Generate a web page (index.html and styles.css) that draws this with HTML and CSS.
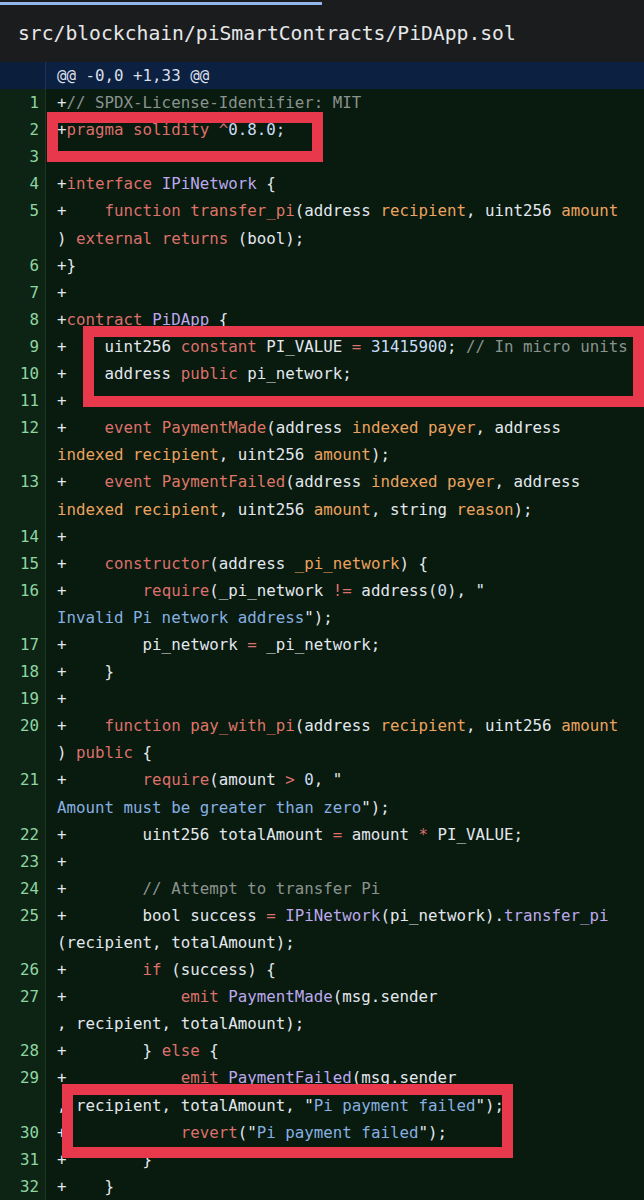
FILE: index.html
```
<!DOCTYPE html>
<html>
<head>
<meta charset="utf-8">
<link rel="stylesheet" href="styles.css">
</head>
<body>
<div class="page">
  <header class="filehead">
    <div class="progress"></div>
    <div class="title">src/blockchain/piSmartContracts/PiDApp.sol</div>
  </header>
  <div class="diff">
    <div class="row hunk"><div class="ln"></div><div class="code">@@ -0,0 +1,33 @@</div></div>
    <div class="row"><div class="ln">1</div><div class="code">+<span class="c">// SPDX-License-Identifier: MIT</span></div></div>
    <div class="row"><div class="ln">2</div><div class="code">+<span class="k">pragma solidity ^</span><span class="n">0.8.0;</span></div></div>
    <div class="row"><div class="ln">3</div><div class="code">+</div></div>
    <div class="row"><div class="ln">4</div><div class="code">+<span class="k">interface</span> <span class="t">IPiNetwork</span> {</div></div>
    <div class="row"><div class="ln">5</div><div class="code">+    <span class="k">function</span> <span class="f">transfer_pi</span>(address <span class="p">recipient</span>, uint256 <span class="p">amount</span></div></div>
    <div class="row"><div class="ln"></div><div class="code">) <span class="k">external</span> <span class="k">returns</span> (bool);</div></div>
    <div class="row"><div class="ln">6</div><div class="code">+}</div></div>
    <div class="row"><div class="ln">7</div><div class="code">+</div></div>
    <div class="row"><div class="ln">8</div><div class="code">+<span class="k">contract</span> <span class="t">PiDApp</span> {</div></div>
    <div class="row"><div class="ln">9</div><div class="code">+    uint256 <span class="k">constant</span> PI_VALUE <span class="k">=</span> <span class="n">31415900</span>; <span class="c">// In micro units</span></div></div>
    <div class="row"><div class="ln">10</div><div class="code">+    address <span class="k">public</span> pi_network;</div></div>
    <div class="row"><div class="ln">11</div><div class="code">+</div></div>
    <div class="row"><div class="ln">12</div><div class="code">+    <span class="k">event</span> <span class="f">PaymentMade</span>(address <span class="p">indexed</span> <span class="p">payer</span>, address</div></div>
    <div class="row"><div class="ln"></div><div class="code"><span class="p">indexed</span> <span class="p">recipient</span>, uint256 <span class="p">amount</span>);</div></div>
    <div class="row"><div class="ln">13</div><div class="code">+    <span class="k">event</span> <span class="f">PaymentFailed</span>(address <span class="p">indexed</span> <span class="p">payer</span>, address</div></div>
    <div class="row"><div class="ln"></div><div class="code"><span class="p">indexed</span> <span class="p">recipient</span>, uint256 <span class="p">amount</span>, string <span class="p">reason</span>);</div></div>
    <div class="row"><div class="ln">14</div><div class="code">+</div></div>
    <div class="row"><div class="ln">15</div><div class="code">+    <span class="k">constructor</span>(address <span class="p">_pi_network</span>) {</div></div>
    <div class="row"><div class="ln">16</div><div class="code">+        <span class="k">require</span>(_pi_network <span class="k">!=</span> address(<span class="n">0</span>), "</div></div>
    <div class="row"><div class="ln"></div><div class="code"><span class="s">Invalid Pi network address</span>");</div></div>
    <div class="row"><div class="ln">17</div><div class="code">+        pi_network <span class="k">=</span> _pi_network;</div></div>
    <div class="row"><div class="ln">18</div><div class="code">+    }</div></div>
    <div class="row"><div class="ln">19</div><div class="code">+</div></div>
    <div class="row"><div class="ln">20</div><div class="code">+    <span class="k">function</span> <span class="f">pay_with_pi</span>(address <span class="p">recipient</span>, uint256 <span class="p">amount</span></div></div>
    <div class="row"><div class="ln"></div><div class="code">) <span class="k">public</span> {</div></div>
    <div class="row"><div class="ln">21</div><div class="code">+        <span class="k">require</span>(amount <span class="k">&gt;</span> <span class="n">0</span>, "</div></div>
    <div class="row"><div class="ln"></div><div class="code"><span class="s">Amount must be greater than zero</span>");</div></div>
    <div class="row"><div class="ln">22</div><div class="code">+        uint256 totalAmount <span class="k">=</span> amount <span class="k">*</span> PI_VALUE;</div></div>
    <div class="row"><div class="ln">23</div><div class="code">+</div></div>
    <div class="row"><div class="ln">24</div><div class="code">+        <span class="c">// Attempt to transfer Pi</span></div></div>
    <div class="row"><div class="ln">25</div><div class="code">+        bool success <span class="k">=</span> <span class="t">IPiNetwork</span>(pi_network).<span class="t">transfer_pi</span></div></div>
    <div class="row"><div class="ln"></div><div class="code">(recipient, totalAmount);</div></div>
    <div class="row"><div class="ln">26</div><div class="code">+        <span class="k">if</span> (success) {</div></div>
    <div class="row"><div class="ln">27</div><div class="code">+            <span class="k">emit</span> <span class="t">PaymentMade</span>(msg.sender</div></div>
    <div class="row"><div class="ln"></div><div class="code">, recipient, totalAmount);</div></div>
    <div class="row"><div class="ln">28</div><div class="code">+        } <span class="k">else</span> {</div></div>
    <div class="row"><div class="ln">29</div><div class="code">+            <span class="k">emit</span> <span class="t">PaymentFailed</span>(msg.sender</div></div>
    <div class="row"><div class="ln"></div><div class="code">, recipient, totalAmount, "<span class="s">Pi payment failed</span>");</div></div>
    <div class="row"><div class="ln">30</div><div class="code">+            <span class="k">revert</span>("<span class="s">Pi payment failed</span>");</div></div>
    <div class="row"><div class="ln">31</div><div class="code">+        }</div></div>
    <div class="row"><div class="ln">32</div><div class="code">+    }</div></div>
  </div>
  <div class="mark mark-1"></div>
  <div class="mark mark-2"></div>
  <div class="mark mark-3"></div>
</div>
</body>
</html>
```

FILE: styles.css
```
html, body {
  margin: 0;
  padding: 0;
  background: #091a0f;
}

.page {
  position: relative;
  width: 644px;
  height: 1200px;
  overflow: hidden;
  font-family: "DejaVu Sans Mono", "Liberation Mono", monospace;
}

.filehead {
  height: 62px;
  background: #1b1c1e;
  display: flex;
  flex-direction: column;
}

.progress {
  margin-top: 2px;
  width: 322px;
  height: 3px;
  background: #93b7ec;
}

.title {
  padding-left: 18px;
  margin-top: 17px;
  font-size: 19.7px;
  line-height: 24px;
  color: #e6e7e9;
  white-space: pre;
}

.diff {
  display: flex;
  flex-direction: column;
}

.row {
  display: flex;
  height: 27.1px;
  line-height: 27.1px;
  font-size: 15.8px;
  background: #091a0f;
}

.ln {
  width: 39px;
  padding-right: 6px;
  flex: none;
  text-align: right;
  color: #8fd6a2;
  background: #0d2415;
  border-right: 1px solid #1c3824;
}

.code {
  padding-left: 11px;
  white-space: pre;
  color: #e3e8ee;
}

.hunk {
  background: #0c2141;
}

.hunk .ln {
  background: #0b1e3b;
  border-right-color: #1a3558;
}

.hunk .code {
  color: #d8dfe8;
}

.k { color: #dc706b; }
.f { color: #de7667; }
.p { color: #eba35f; }
.t { color: #bca9ec; }
.s { color: #86b0e0; }
.c { color: #8a938e; }
.n { color: #c9def5; }

.mark {
  position: absolute;
  box-sizing: border-box;
  border: 11px solid #e8394c;
}

.mark-1 {
  left: 47px;
  top: 112px;
  width: 276px;
  height: 50px;
}

.mark-2 {
  left: 83px;
  top: 326px;
  width: 561px;
  height: 81px;
}

.mark-3 {
  left: 62px;
  top: 1084px;
  width: 451px;
  height: 74px;
}
```
